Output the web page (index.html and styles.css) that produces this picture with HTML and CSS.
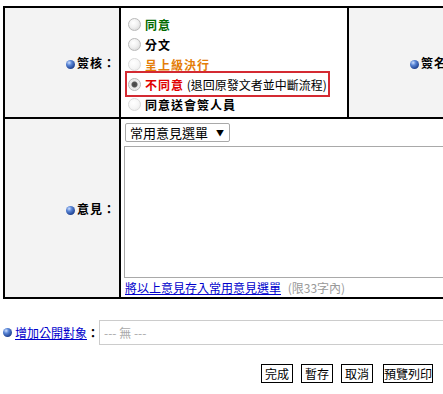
FILE: index.html
```html
<!DOCTYPE html>
<html lang="zh-Hant">
<head>
  <meta charset="UTF-8">
  <meta name="viewport" content="width=device-width, initial-scale=1.0">
  <title>簽核</title>
  <link rel="stylesheet" href="styles.css">
</head>
<body>
  <div class="page">
    <table class="form">
      <tr>
        <td class="lbl lbl-top"><span class="dot"></span>簽核：</td>
        <td class="opts">
          <label class="opt"><input type="radio" name="sign"><span class="ok">同意</span></label>
          <label class="opt"><input type="radio" name="sign"><span class="b">分文</span></label>
          <label class="opt"><input type="radio" name="sign" class="dim"><span class="up">呈上級決行</span></label>
          <label class="opt opt-mark"><input type="radio" name="sign" checked><span class="no">不同意</span>&nbsp;(退回原發文者並中斷流程)</label>
          <label class="opt"><input type="radio" name="sign" class="dim"><span class="b">同意送會簽人員</span></label>
        </td>
        <td class="lbl lbl-top"><span class="dot"></span>簽名：</td>
        <td class="val"></td>
      </tr>
      <tr>
        <td class="lbl lbl-note"><span class="dot"></span>意見：</td>
        <td class="note" colspan="3">
          <span class="selwrap">
            <select class="sel">
              <option>常用意見選單</option>
            </select>
          </span>
          <textarea class="memo"></textarea>
          <div class="save">
            <a href="#">將以上意見存入常用意見選單</a>
            <span class="hint">(限33字內)</span>
          </div>
        </td>
      </tr>
    </table>

    <div class="public">
      <span class="dot"></span>
      <a href="#">增加公開對象</a>
      <span class="colon">：</span>
      <input type="text" class="pub-input" placeholder="--- 無 ---">
    </div>

    <div class="actions">
      <button>完成</button>
      <button>暫存</button>
      <button>取消</button>
      <button class="wide">預覽列印</button>
    </div>
  </div>
</body>
</html>
```

FILE: styles.css
```css
* {
  box-sizing: border-box;
}
html, body {
  overflow: hidden;
}
body {
  margin: 0;
  font-family: "Noto Sans CJK TC", "Noto Sans", sans-serif;
  font-size: 12px;
  color: #000;
  background: #fff;
}
.page {
  width: 443px;
  padding: 6px 10px 0 3px;
}
.form {
  border-collapse: separate;
  border-spacing: 0;
  table-layout: fixed;
  width: 662px;
  border-top: 2px solid #000;
  border-left: 2px solid #000;
}
.form td {
  border-right: 2px solid #000;
  border-bottom: 2px solid #000;
  padding: 0;
}
.lbl {
  width: 116px;
  background: #f3f3f3;
  text-align: right;
  vertical-align: middle;
  padding-right: 3px !important;
  font-weight: bold;
  letter-spacing: 1px;
}
.lbl-top {
  height: 111px;
}
.lbl-note {
  height: 180px;
}
.dot {
  display: inline-block;
  flex: none;
  width: 9px;
  height: 9px;
  border-radius: 50%;
  margin-right: 2px;
  vertical-align: -1px;
  background: radial-gradient(circle at 35% 30%, #cfe0ff 0, #5a86d6 30%, #1d3f8f 75%, #0e2456 100%);
}
.opts {
  width: 228px;
  vertical-align: top;
  padding: 6px 0 3px 7px !important;
  background: #fff;
}
.val {
  width: 200px;
  background: #fff;
}
.opt {
  display: flex;
  align-items: center;
  height: 20px;
  white-space: nowrap;
  width: fit-content;
}
.opt input {
  -webkit-appearance: none;
  appearance: none;
  width: 13px;
  height: 13px;
  margin: 0 4px 0 0;
  border-radius: 50%;
  border: 1px solid #b9b9b9;
  background: radial-gradient(circle at 40% 35%, #fff 0, #f1f1f1 45%, #cfcfcf 100%);
}
.opt input.dim {
  border-color: #dadada;
  background: radial-gradient(circle at 40% 35%, #fff 0, #f7f7f7 50%, #e6e6e6 100%);
}
.opt input:checked {
  background: radial-gradient(circle, #444 0, #555 2.5px, #e6e6e6 3.5px, #fafafa 100%);
}
.opt-mark {
  outline: 2px solid #d42a32;
  outline-offset: 1px;
}
.b, .ok, .up, .no {
  font-weight: bold;
  letter-spacing: 1px;
}
.ok {
  color: #006a00;
}
.up {
  color: #e47d08;
  text-decoration: underline;
}
.no {
  color: #e00000;
}
.note {
  vertical-align: top;
  padding: 4px 0 0 3px !important;
  background: #fff;
}
.selwrap {
  position: relative;
  display: inline-block;
  margin-left: 1px;
}
.selwrap::after {
  content: "▼";
  position: absolute;
  right: 6px;
  top: 4px;
  font-size: 8px;
  pointer-events: none;
}
.sel {
  -webkit-appearance: none;
  appearance: none;
  display: block;
  width: 105px;
  height: 19px;
  padding: 0 0 0 4px;
  border: 1px solid #a9a9a9;
  border-radius: 2px;
  background: #fff;
  font-family: inherit;
  font-size: 13px;
  line-height: 17px;
  color: #000;
}
.memo {
  display: block;
  width: 520px;
  height: 132px;
  margin-top: 4px;
  border: 1px solid #a9a9a9;
  resize: none;
}
.save {
  margin-top: 1px;
  height: 18px;
  line-height: 18px;
  padding-left: 1px;
}
a {
  color: #0000cc;
}
.hint {
  color: #999;
  margin-left: 4px;
}
.public {
  display: flex;
  align-items: center;
  margin-top: 21px;
  height: 25px;
  white-space: nowrap;
}
.public a, .public .colon {
  flex: none;
}
.public .dot {
  margin-right: 3px;
}
.colon {
  font-weight: bold;
}
.pub-input {
  flex: none;
  width: 400px;
  height: 25px;
  border: 1px solid #ccc;
  padding: 0 4px;
  font-family: inherit;
  font-size: 12px;
}
.pub-input::placeholder {
  color: #aaa;
}
.actions {
  display: flex;
  justify-content: flex-end;
  gap: 8px;
  margin-top: 19px;
}
.actions button {
  height: 19px;
  padding: 0 3px;
  border: 1px solid #000;
  background: #fff;
  font-family: inherit;
  font-size: 12px;
  line-height: 17px;
  color: #000;
}
.actions .wide {
  padding: 0;
  margin-left: 2px;
}
```
